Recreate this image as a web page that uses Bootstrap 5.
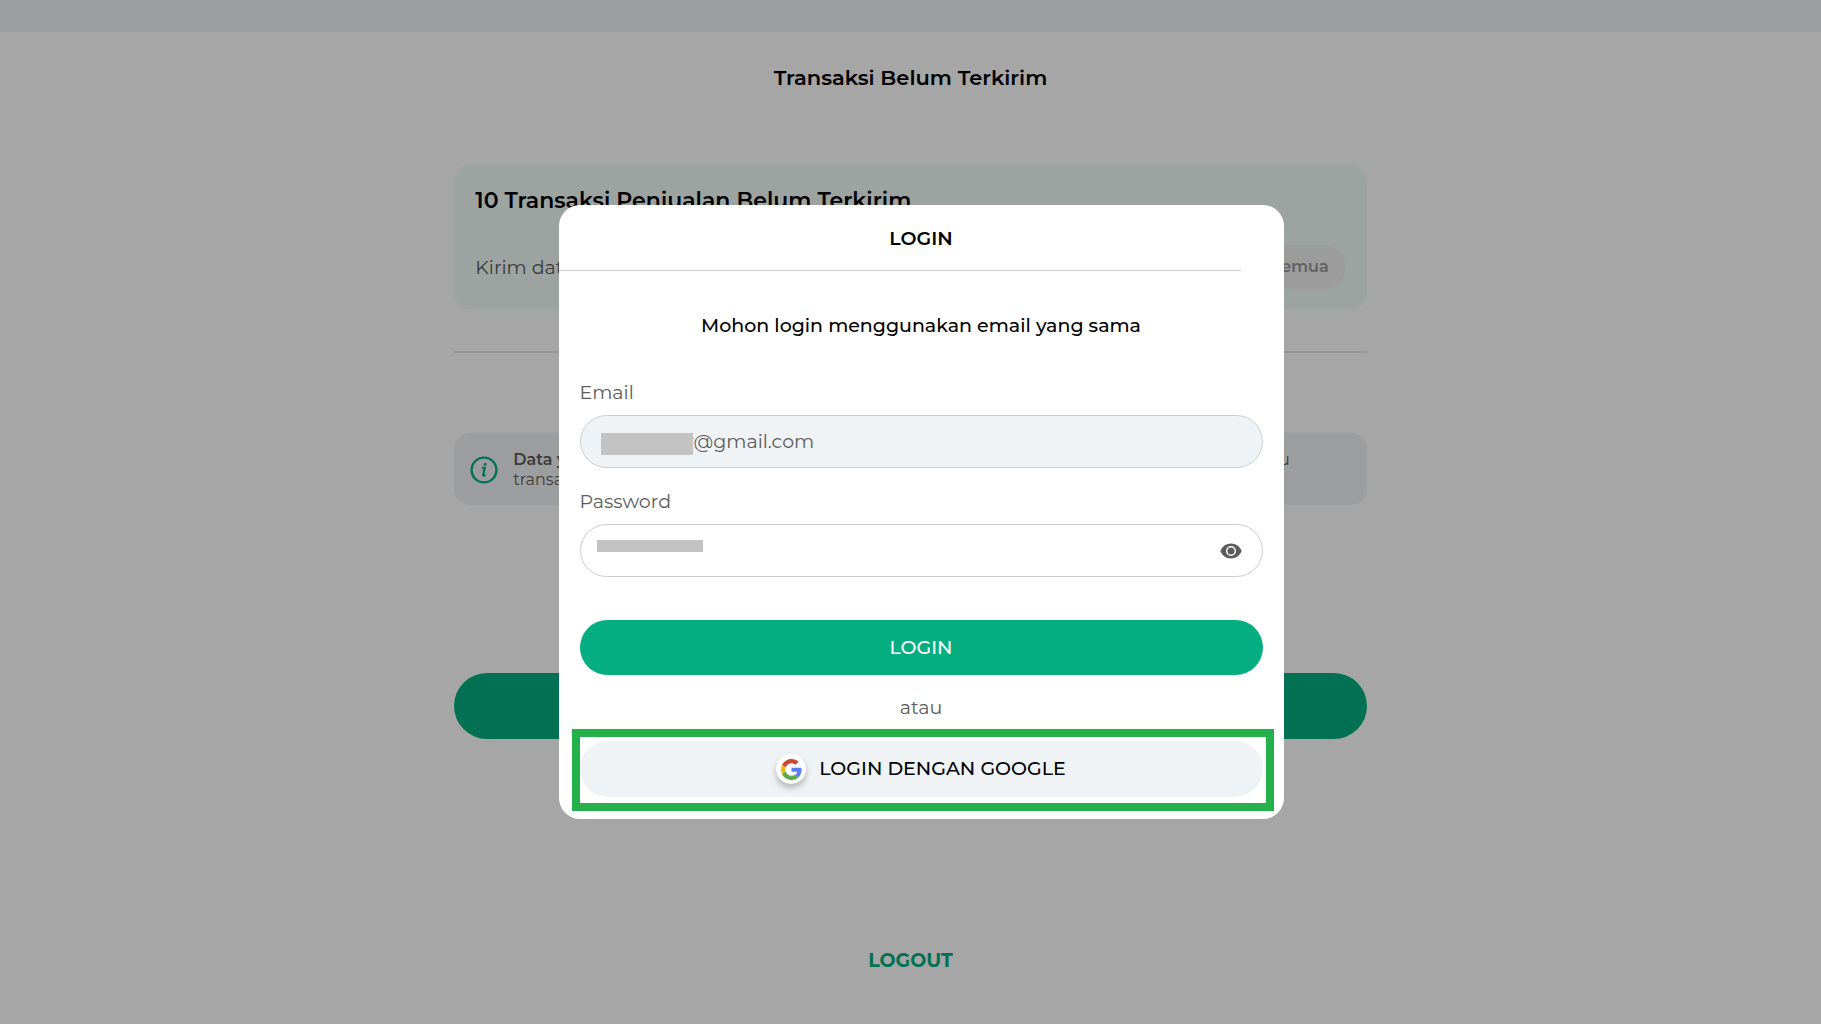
<!DOCTYPE html>
<html lang="id">
<head>
<meta charset="utf-8">
<meta name="viewport" content="width=device-width, initial-scale=1">
<title>Transaksi Belum Terkirim</title>
<link href="https://cdn.jsdelivr.net/npm/bootstrap@5.3.0/dist/css/bootstrap.min.css" rel="stylesheet">
<style>
  :root { --brand: #04ae80; --soft: #eff3f6; --dim: #f0f1f4; --ink: #000; --grey: #5c5c5c; --line: #cdcdcd; }
  body { font-family: Montserrat, Inter, "Open Sans", sans-serif; color: var(--ink); background: #fff; }
  .status-strip { height: 32px; background: var(--dim); }
  .page-head { padding: 32px 0 73px; }
  .page-title { font-size: 21px; line-height: 28px; font-weight: 600; }
  .page-body { width: 50.1%; min-width: 600px; }
  .unsent-box { background: #f0fbf6; border-radius: 16px; padding: 22px 21px 20px; }
  .unsent-title { font-size: 22px; line-height: 28px; font-weight: 600; margin-bottom: 30px; }
  .unsent-text { font-size: 19px; line-height: 28px; color: var(--grey); padding-top: 1px; }
  .send-all { font-size: 16px; line-height: 32px; font-weight: 600; padding: 6px 17px; --bs-btn-disabled-opacity: 1; --bs-btn-disabled-color: #96969a; --bs-btn-disabled-bg: #f0f0f2; border: 0; }
  .rule { border-top: 2px solid #e2e2e4; margin: 42px 0 80px; }
  .info-box { background: var(--dim); border-radius: 16px; padding: 17px 77px 15px 16px; gap: 15px; color: var(--grey); font-size: 16px; line-height: 20px; }
  .wide-btn { height: 66px; margin-top: 168px; background: var(--brand); }
  .logout-link { color: var(--brand); font-size: 19px; line-height: 28px; font-weight: 700; margin-top: 208px; }
  .veil { position: fixed; inset: 0; background: rgba(0,0,0,.35); padding: 205px 0 0 21px; }
  .login-card { width: 725px; max-width: 96%; background: #fff; border-radius: 21px; padding-bottom: 8px; }
  .login-title { font-size: 19px; line-height: 24px; font-weight: 600; padding: 22px 0 19px; margin: 0; }
  .login-rule { border-top: 1px solid var(--line); margin-right: 43px; }
  .login-form { padding: 0 21px; }
  .hint { font-size: 19px; line-height: 28px; font-weight: 500; margin: 41px 0 39px; }
  .field-label { font-size: 19px; line-height: 28px; color: var(--grey); margin-bottom: 8px; }
  .field-box { height: 53px; border: 1px solid var(--line); font-size: 19px; color: var(--grey); padding: 0 60px 0 106px; }
  .field-box.filled { background: var(--soft); }
  .veiled-text { position: absolute; background: #c3c3c3; }
  .veiled-mail { left: 21px; top: 18px; width: 92px; height: 22px; }
  .veiled-pass { left: 17px; top: 16px; width: 106px; height: 12px; }
  .eye-btn { position: absolute; right: 21px; top: 15px; height: 24px; color: var(--grey); }
  .login-btn { height: 55px; background: var(--brand); color: #fff; font-size: 19px; font-weight: 500; padding: 2px 0 0; margin-top: 43px; }
  .or-text { font-size: 19px; line-height: 28px; color: var(--grey); padding: 19px 0 7px; }
  .marked { border: 8px solid #24b14c; margin: 0 10px 0 13px; padding: 4px 3px 6px 0; }
  .google-btn { height: 56px; background: var(--soft); color: #000; font-size: 19px; font-weight: 500; gap: 13px; }
  .g-disc { width: 30px; height: 30px; background: #fff; box-shadow: 0 4px 6px rgba(0,0,0,.25); }
</style>
</head>
<body>
<div class="status-strip"></div>
<main class="page-body mx-auto d-flex flex-column">
  <header class="page-head text-center"><h1 class="page-title m-0">Transaksi Belum Terkirim</h1></header>
  <section class="unsent-box">
    <h2 class="unsent-title">10 Transaksi Penjualan Belum Terkirim</h2>
    <div class="d-flex justify-content-between align-items-center">
      <span class="unsent-text">Kirim data</span>
      <button class="btn rounded-pill send-all" type="button" disabled>Kirim Semua</button>
    </div>
  </section>
  <div class="rule"></div>
  <section class="info-box d-flex align-items-center">
    <svg width="28" height="28" viewBox="0 0 28 28" fill="none" stroke="#04ae80" stroke-linecap="round" aria-hidden="true">
      <circle cx="14" cy="14" r="12.4" stroke-width="2.4"/>
      <path d="M12.900 11.800h1.800l-1.500 7q-.1 1.300 1.500.6" stroke-width="2.200"/>
      <circle cx="15.200" cy="8.300" r=".8" stroke-width="1.400"/>
    </svg>
    <div class="flex-grow-1">
      <div class="d-flex justify-content-between"><strong class="fw-semibold">Data yang</strong><span>perlu</span></div>
      <div>transaksi</div>
    </div>
  </section>
  <button class="btn rounded-pill wide-btn w-100" type="button" aria-label="Kirim"></button>
  <a class="logout-link align-self-center text-decoration-none" href="#">LOGOUT</a>
</main>

<div class="veil d-flex justify-content-center align-items-start">
  <div class="login-card" role="dialog" aria-labelledby="login-title">
    <h2 class="login-title text-center" id="login-title">LOGIN</h2>
    <div class="login-rule"></div>
    <form>
      <div class="login-form">
        <p class="hint text-center">Mohon login menggunakan email yang sama</p>
        <label class="field-label d-block" for="mail">Email</label>
        <div class="position-relative">
          <input class="form-control rounded-pill field-box filled" id="mail" type="text" value="r@gmail.com" readonly>
          <span class="veiled-text veiled-mail"></span>
        </div>
        <label class="field-label d-block mt-3 pt-1" for="pass">Password</label>
        <div class="position-relative">
          <input class="form-control rounded-pill field-box" id="pass" type="password">
          <span class="veiled-text veiled-pass"></span>
          <button class="eye-btn btn p-0 border-0 d-flex align-items-center" type="button" aria-label="Password">
            <svg width="22" height="16" viewBox="0 0 22 16" aria-hidden="true"><path fill="currentColor" d="M11 .5C6 .5 2 3.500 .3 8 2 12.500 6 15.500 11 15.500S20 12.500 21.700 8C20 3.500 16 .5 11 .5Z"/><circle cx="11" cy="8" r="4.300" fill="currentColor" stroke="#fff" stroke-width="1.500"/></svg>
          </button>
        </div>
        <button class="login-btn btn rounded-pill w-100 border-0" type="button">LOGIN</button>
        <div class="or-text text-center">atau</div>
      </div>
      <div class="marked">
        <button class="google-btn btn rounded-pill w-100 border-0 d-flex align-items-center justify-content-center" type="button">
          <span class="g-disc rounded-circle d-flex align-items-center justify-content-center">
            <svg width="21" height="21" viewBox="0 0 48 48" aria-hidden="true">
              <path fill="#cb4634" d="M24 9.500c3.540 0 6.710 1.220 9.210 3.600l6.850-6.850C35.900 2.380 30.470 0 24 0 14.620 0 6.510 5.380 2.560 13.220l7.980 6.190C12.430 13.720 17.740 9.500 24 9.500z"/>
              <path fill="#587df5" d="M46.980 24.550c0-1.570-.15-3.090-.38-4.550H24v9.020h12.940c-.58 2.960-2.260 5.480-4.780 7.180l7.730 6c4.510-4.180 7.090-10.360 7.090-17.650z"/>
              <path fill="#ecbc0c" d="M10.530 28.590c-.48-1.450-.76-2.990-.76-4.590s.27-3.140.76-4.590l-7.980-6.190C.92 16.460 0 20.120 0 24c0 3.880.92 7.540 2.560 10.780l7.970-6.190z"/>
              <path fill="#5faa48" d="M24 48c6.480 0 11.930-2.130 15.890-5.810l-7.730-6c-2.150 1.450-4.920 2.300-8.160 2.300-6.260 0-11.570-4.220-13.470-9.910l-7.980 6.190C6.510 42.620 14.620 48 24 48z"/>
            </svg>
          </span>
          <span>LOGIN DENGAN GOOGLE</span>
        </button>
      </div>
    </form>
  </div>
</div>
<script src="https://cdn.jsdelivr.net/npm/bootstrap@5.3.0/dist/js/bootstrap.bundle.min.js"></script>
</body>
</html>
